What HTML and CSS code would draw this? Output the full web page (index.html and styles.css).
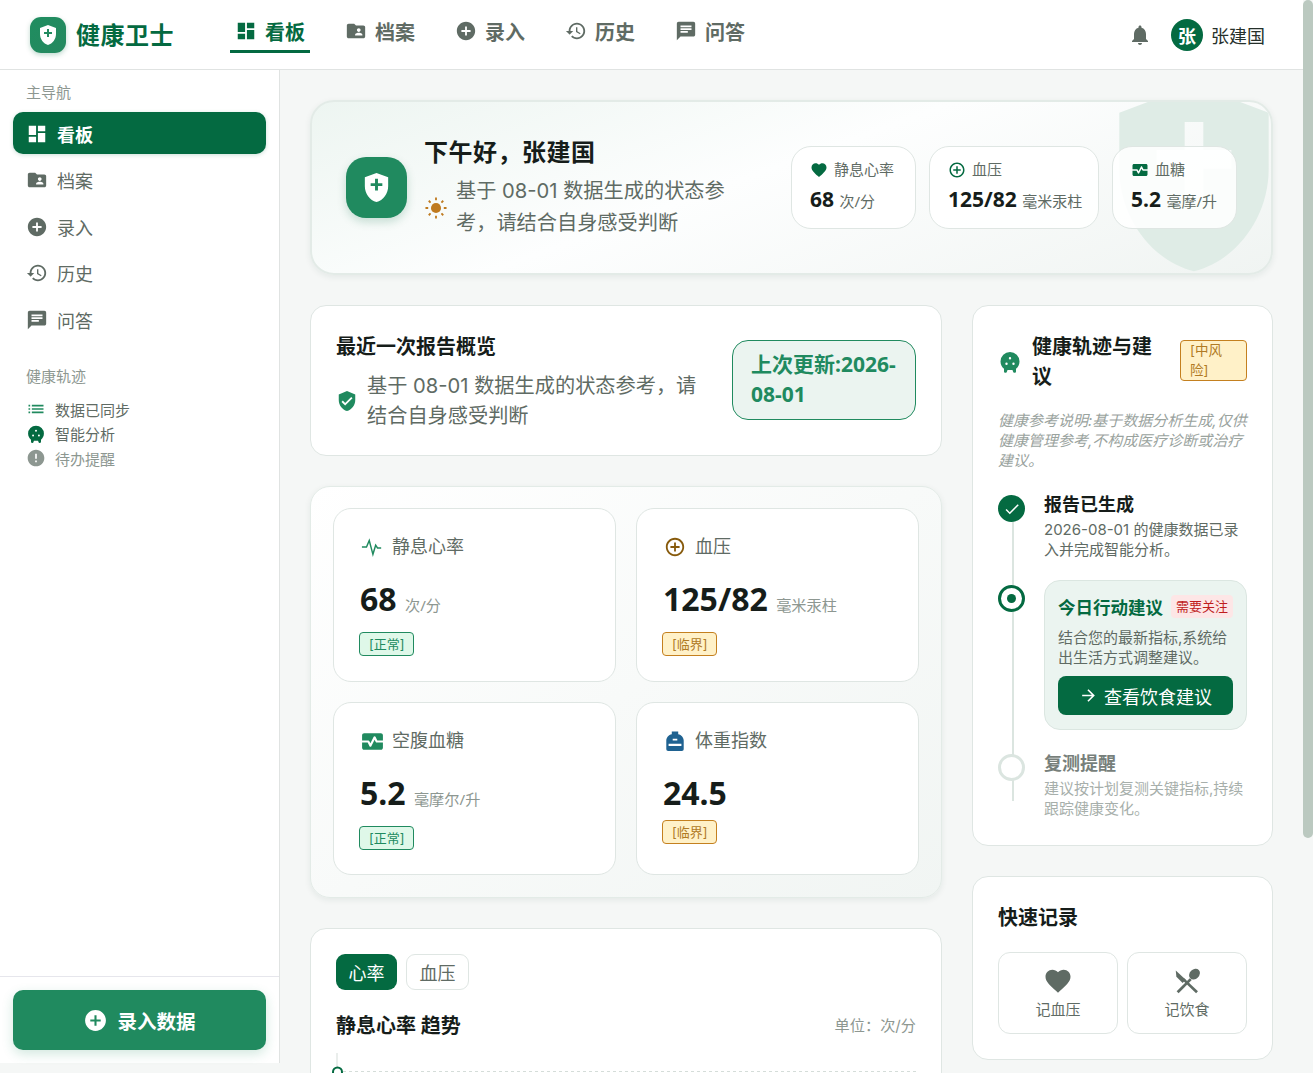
FILE: index.html
```html
<!DOCTYPE html>
<html lang="zh-CN">
<head>
    <meta charset="UTF-8">
    <meta name="viewport" content="width=device-width, initial-scale=1.0">
    <title>健康卫士</title>
    <link rel="stylesheet" href="styles.css">
</head>
<body>
    <svg class="sprite" aria-hidden="true">
        <symbol id="i-dashboard" viewBox="0 0 24 24"><path d="M3 13h8V3H3v10zm0 8h8v-6H3v6zm10 0h8V11h-8v10zm0-18v6h8V3h-8z"/></symbol>
        <symbol id="i-folder" viewBox="0 0 24 24"><path d="M20 6h-8l-2-2H4c-1.1 0-1.99.9-1.99 2L2 18c0 1.1.9 2 2 2h16c1.1 0 2-.9 2-2V8c0-1.1-.9-2-2-2zm-5 3c1.1 0 2 .9 2 2s-.9 2-2 2-2-.9-2-2 .9-2 2-2zm4 8h-8v-1c0-1.33 2.67-2 4-2s4 .67 4 2v1z"/></symbol>
        <symbol id="i-add" viewBox="0 0 24 24"><path d="M12 2C6.48 2 2 6.48 2 12s4.48 10 10 10 10-4.48 10-10S17.52 2 12 2zm5 11h-4v4h-2v-4H7v-2h4V7h2v4h4v2z"/></symbol>
        <symbol id="i-history" viewBox="0 0 24 24"><path d="M13 3c-4.97 0-9 4.03-9 9H1l3.89 3.89.07.14L9 12H6c0-3.87 3.13-7 7-7s7 3.13 7 7-3.13 7-7 7c-1.93 0-3.68-.79-4.94-2.06l-1.42 1.42C8.27 19.99 10.51 21 13 21c4.97 0 9-4.03 9-9s-4.03-9-9-9zm-1 5v5l4.28 2.54.72-1.21-3.5-2.08V8H12z"/></symbol>
        <symbol id="i-chat" viewBox="0 0 24 24"><path d="M20 2H4c-1.1 0-1.99.9-1.99 2L2 22l4-4h14c1.1 0 2-.9 2-2V4c0-1.1-.9-2-2-2zM6 9h12v2H6V9zm8 5H6v-2h8v2zm4-6H6V6h12v2z"/></symbol>
        <symbol id="i-bell" viewBox="0 0 24 24"><path d="M12 22c1.1 0 2-.9 2-2h-4c0 1.1.89 2 2 2zm6-6v-5c0-3.07-1.64-5.64-4.5-6.32V4c0-.83-.67-1.5-1.5-1.5s-1.5.67-1.5 1.5v.68C7.63 5.36 6 7.92 6 11v5l-2 2v1h16v-1l-2-2z"/></symbol>
        <symbol id="i-shield" viewBox="0 0 24 24"><path fill-rule="evenodd" d="M12 2 4 5v6.09c0 5.05 3.41 9.76 8 10.91 4.59-1.15 8-5.86 8-10.91V5l-8-3zM11 6h2v3h3v2h-3v3h-2v-3H8V9h3V6z"/></symbol>
        <symbol id="i-verified" viewBox="0 0 24 24"><path d="M12 1 3 5v6c0 5.55 3.84 10.74 9 12 5.16-1.26 9-6.45 9-12V5l-9-4zm-2 16-4-4 1.41-1.41L10 14.17l6.59-6.59L18 9l-8 8z"/></symbol>
        <symbol id="i-heart" viewBox="0 0 24 24"><path d="M12 21.35l-1.45-1.32C5.4 15.36 2 12.28 2 8.5 2 5.42 4.42 3 7.5 3c1.74 0 3.41.81 4.5 2.09C13.09 3.81 14.76 3 16.5 3 19.58 3 22 5.42 22 8.5c0 3.78-3.4 6.86-8.55 11.54L12 21.35z"/></symbol>
        <symbol id="i-point" viewBox="0 0 24 24"><path d="M13 7h-2v4H7v2h4v4h2v-4h4v-2h-4V7zm-1-5C6.48 2 2 6.48 2 12s4.48 10 10 10 10-4.48 10-10S17.52 2 12 2zm0 18c-4.41 0-8-3.59-8-8s3.59-8 8-8 8 3.59 8 8-3.59 8-8 8z"/></symbol>
        <symbol id="i-monitor" viewBox="0 0 24 24"><path d="M15.11 12.45 14 10.24l-3.11 6.21c-.16.34-.51.55-.89.55s-.73-.21-.89-.55L7.38 13H2v5c0 1.1.9 2 2 2h16c1.1 0 2-.9 2-2v-5h-6c-.38 0-.73-.21-.89-.55zM20 4H4c-1.1 0-2 .9-2 2v5h6c.38 0 .73.21.89.55L10 13.76l3.11-6.21c.34-.68 1.45-.68 1.79 0L16.62 11H22V6c0-1.1-.9-2-2-2z"/></symbol>
        <symbol id="i-pulse" viewBox="0 0 24 24"><polyline points="1,12 6,12 9,5 13,20 16,10 18,13 22,13" fill="none" stroke="currentColor" stroke-width="1.6"/></symbol>
        <symbol id="i-list" viewBox="0 0 24 24"><path d="M3 13h2v-2H3v2zm0 4h2v-2H3v2zm0-8h2V7H3v2zm4 4h14v-2H7v2zm0 4h14v-2H7v2zM7 7v2h14V7H7z"/></symbol>
        <symbol id="i-blob" viewBox="0 0 24 24"><path fill-rule="evenodd" d="M12 2a9.5 9.5 0 0 0-9.5 9.5c0 3.2 1.5 5.7 3.5 7.3V21a1.5 1.5 0 0 0 3 .5l.5-1.5h5l.5 1.5a1.5 1.5 0 0 0 3-.5v-2.2c2-1.6 3.5-4.1 3.5-7.3A9.5 9.5 0 0 0 12 2zm0 5a1.2 1.2 0 1 1 0 2.4A1.2 1.2 0 0 1 12 7zm-3.5 5.5a1.2 1.2 0 1 1 0 2.4 1.2 1.2 0 0 1 0-2.4zm7 0a1.2 1.2 0 1 1 0 2.4 1.2 1.2 0 0 1 0-2.4z"/></symbol>
        <symbol id="i-error" viewBox="0 0 24 24"><path d="M12 2C6.48 2 2 6.48 2 12s4.48 10 10 10 10-4.48 10-10S17.52 2 12 2zm1 15h-2v-2h2v2zm0-4h-2V7h2v6z"/></symbol>
        <symbol id="i-check" viewBox="0 0 24 24"><path d="M9 16.17 4.83 12l-1.42 1.41L9 19 21 7l-1.41-1.41z"/></symbol>
        <symbol id="i-arrow" viewBox="0 0 24 24"><path d="M12 4l-1.41 1.41L16.17 11H4v2h12.17l-5.58 5.59L12 20l8-8z"/></symbol>
        <symbol id="i-sun" viewBox="0 0 24 24"><circle cx="12" cy="12" r="5.5"/><path d="M11 .5h2v3h-2zM11 20.5h2v3h-2zM.5 11h3v2h-3zM20.5 11h3v2h-3zM3.4 4.8l1.4-1.4 2 2-1.4 1.4zM17.2 18.6l1.4-1.4 2 2-1.4 1.4zM3.4 19.2l2-2 1.4 1.4-2 2zM17.2 5.4l2-2 1.4 1.4-2 2z"/></symbol>
        <symbol id="i-weight" viewBox="0 0 24 24"><path fill-rule="evenodd" d="M8.5 1.5h7v3c3.5.8 6 3.5 6 7V21a2 2 0 0 1-2 2h-15a2 2 0 0 1-2-2v-9.5c0-3.5 2.5-6.2 6-7zM9.5 9.5v2h5v-2zM5 15v2.5h14V15z"/></symbol>
        <symbol id="i-meal" viewBox="0 0 24 24">
            <path d="M3 3.5 11 11l-2.5 2.5-5-5z"/>
            <line x1="9" y1="10.5" x2="20" y2="21" stroke="currentColor" stroke-width="2.2"/>
            <line x1="4.5" y1="21" x2="15" y2="10.5" stroke="currentColor" stroke-width="2.2"/>
            <ellipse cx="18" cy="6.5" rx="3.8" ry="4.8" transform="rotate(45 18 6.5)"/>
        </symbol>
    </svg>

    <div class="window">
        <div class="page">
            <header class="topbar">
                <div class="brand">
                    <span class="brand-mark"><svg class="ic"><use href="#i-shield"/></svg></span>
                    <span class="brand-name">健康卫士</span>
                </div>
                <nav class="topnav">
                    <a class="topnav-item active"><svg class="ic"><use href="#i-dashboard"/></svg>看板</a>
                    <a class="topnav-item"><svg class="ic"><use href="#i-folder"/></svg>档案</a>
                    <a class="topnav-item"><svg class="ic"><use href="#i-add"/></svg>录入</a>
                    <a class="topnav-item"><svg class="ic"><use href="#i-history"/></svg>历史</a>
                    <a class="topnav-item"><svg class="ic"><use href="#i-chat"/></svg>问答</a>
                </nav>
                <div class="topbar-user">
                    <svg class="ic bell"><use href="#i-bell"/></svg>
                    <span class="avatar">张</span>
                    <span class="user-name">张建国</span>
                </div>
            </header>

            <div class="body-row">
                <aside class="sidebar">
                    <div class="side-scroll">
                        <div class="side-label">主导航</div>
                        <nav class="sidenav">
                            <a class="sidenav-item active"><svg class="ic"><use href="#i-dashboard"/></svg>看板</a>
                            <a class="sidenav-item"><svg class="ic"><use href="#i-folder"/></svg>档案</a>
                            <a class="sidenav-item"><svg class="ic"><use href="#i-add"/></svg>录入</a>
                            <a class="sidenav-item"><svg class="ic"><use href="#i-history"/></svg>历史</a>
                            <a class="sidenav-item"><svg class="ic"><use href="#i-chat"/></svg>问答</a>
                        </nav>
                        <div class="side-label second">健康轨迹</div>
                        <ul class="side-status">
                            <li><svg class="ic green"><use href="#i-list"/></svg>数据已同步</li>
                            <li><svg class="ic deep"><use href="#i-blob"/></svg>智能分析</li>
                            <li class="muted"><svg class="ic"><use href="#i-error"/></svg>待办提醒</li>
                        </ul>
                    </div>
                    <div class="side-footer">
                        <button class="record-btn"><svg class="ic"><use href="#i-add"/></svg>录入数据</button>
                    </div>
                </aside>

                <main class="main">
                    <section class="hero">
                        <svg class="ic hero-watermark"><use href="#i-shield"/></svg>
                        <span class="hero-mark"><svg class="ic"><use href="#i-shield"/></svg></span>
                        <div class="hero-text">
                            <h1>下午好，张建国</h1>
                            <div class="hero-sub">
                                <svg class="ic sun"><use href="#i-sun"/></svg>
                                <p>基于 08-01 数据生成的状态参考，请结合自身感受判断</p>
                            </div>
                        </div>
                        <div class="hero-stats">
                            <div class="stat">
                                <div class="stat-label"><svg class="ic"><use href="#i-heart"/></svg>静息心率</div>
                                <div class="stat-value">68 <small>次/分</small></div>
                            </div>
                            <div class="stat">
                                <div class="stat-label"><svg class="ic"><use href="#i-point"/></svg>血压</div>
                                <div class="stat-value">125/82 <small>毫米汞柱</small></div>
                            </div>
                            <div class="stat">
                                <div class="stat-label"><svg class="ic"><use href="#i-monitor"/></svg>血糖</div>
                                <div class="stat-value">5.2 <small>毫摩/升</small></div>
                            </div>
                        </div>
                    </section>

                    <div class="columns">
                        <div class="col-left">
                            <section class="card report">
                                <div class="report-text">
                                    <h2>最近一次报告概览</h2>
                                    <div class="report-sub">
                                        <svg class="ic"><use href="#i-verified"/></svg>
                                        <p>基于 08-01 数据生成的状态参考，请结合自身感受判断</p>
                                    </div>
                                </div>
                                <div class="report-badge">上次更新:2026-08-01</div>
                            </section>

                            <section class="metrics">
                                <div class="metric">
                                    <div class="metric-label"><svg class="ic green"><use href="#i-pulse"/></svg>静息心率</div>
                                    <div class="metric-value">68 <small>次/分</small></div>
                                    <span class="tag ok">[正常]</span>
                                </div>
                                <div class="metric">
                                    <div class="metric-label"><svg class="ic brown"><use href="#i-point"/></svg>血压</div>
                                    <div class="metric-value">125/82 <small>毫米汞柱</small></div>
                                    <span class="tag warn">[临界]</span>
                                </div>
                                <div class="metric">
                                    <div class="metric-label"><svg class="ic green wide"><use href="#i-monitor"/></svg>空腹血糖</div>
                                    <div class="metric-value">5.2 <small>毫摩尔/升</small></div>
                                    <span class="tag ok">[正常]</span>
                                </div>
                                <div class="metric">
                                    <div class="metric-label"><svg class="ic blue"><use href="#i-weight"/></svg>体重指数</div>
                                    <div class="metric-value">24.5</div>
                                    <span class="tag warn">[临界]</span>
                                </div>
                            </section>

                            <section class="card chart-card">
                                <div class="tabs">
                                    <button class="tab active">心率</button>
                                    <button class="tab">血压</button>
                                </div>
                                <div class="chart-head">
                                    <h2>静息心率 趋势</h2>
                                    <span>单位：次/分</span>
                                </div>
                                <svg class="chart" viewBox="0 0 580 120" preserveAspectRatio="none">
                                    <line x1="1" y1="0" x2="1" y2="120" stroke="#d5ddd9"/>
                                    <line x1="1" y1="18.5" x2="580" y2="18.5" stroke="#d5ddd9" stroke-dasharray="3 3"/>
                                    <circle cx="1.5" cy="19" r="4.5" fill="#fff" stroke="#046a41" stroke-width="2"/>
                                </svg>
                            </section>
                        </div>

                        <div class="col-right">
                            <section class="card rail">
                                <div class="rail-head">
                                    <svg class="ic green"><use href="#i-blob"/></svg>
                                    <h2>健康轨迹与建议</h2>
                                    <span class="tag warn risk">[中风险]</span>
                                </div>
                                <p class="rail-note">健康参考说明:基于数据分析生成,仅供健康管理参考,不构成医疗诊断或治疗建议。</p>
                                <div class="timeline">
                                    <div class="step">
                                        <span class="dot done"><svg class="ic"><use href="#i-check"/></svg></span>
                                        <div>
                                            <h3>报告已生成</h3>
                                            <p>2026-08-01 的健康数据已录入并完成智能分析。</p>
                                        </div>
                                    </div>
                                    <div class="step current">
                                        <span class="dot now"></span>
                                        <div class="advice">
                                            <div class="advice-head">
                                                <h3>今日行动建议</h3>
                                                <span class="pill">需要关注</span>
                                            </div>
                                            <p>结合您的最新指标,系统给出生活方式调整建议。</p>
                                            <button class="advice-btn"><svg class="ic"><use href="#i-arrow"/></svg>查看饮食建议</button>
                                        </div>
                                    </div>
                                    <div class="step later">
                                        <span class="dot idle"></span>
                                        <div>
                                            <h3>复测提醒</h3>
                                            <p>建议按计划复测关键指标,持续跟踪健康变化。</p>
                                        </div>
                                    </div>
                                </div>
                            </section>

                            <section class="card quick">
                                <h2>快速记录</h2>
                                <div class="quick-grid">
                                    <button class="quick-btn"><svg class="ic"><use href="#i-heart"/></svg>记血压</button>
                                    <button class="quick-btn"><svg class="ic"><use href="#i-meal"/></svg>记饮食</button>
                                </div>
                            </section>
                        </div>
                    </div>
                </main>
            </div>
        </div>
        <div class="scrollbar"><div class="scrollbar-thumb"></div></div>
    </div>
</body>
</html>
```

FILE: styles.css
```css
* {
    box-sizing: border-box;
}

html, body {
    margin: 0;
    height: 100%;
    overflow: hidden;
}

body {
    font-family: Inter, "Noto Sans CJK SC", sans-serif;
    background-color: #f5f7f6;
    color: #161d1a;
}

h1, h2, h3, p, ul {
    margin: 0;
    padding: 0;
}

button {
    font-family: inherit;
    border: none;
    cursor: pointer;
}

.sprite {
    display: none;
}

.ic {
    width: 24px;
    height: 24px;
    fill: currentColor;
    flex-shrink: 0;
}

.green { color: #208a5f; }
.deep { color: #046a41; }
.brown { color: #875a0c; }
.blue { color: #1f6291; }

.window {
    display: flex;
    height: 100vh;
}

.page {
    flex: 1;
    min-width: 0;
    display: flex;
    flex-direction: column;
}

.scrollbar {
    width: 10px;
    flex-shrink: 0;
}

.scrollbar-thumb {
    height: 838px;
    background-color: #bbc9c0;
    border-radius: 5px;
}

/* top bar */
.topbar {
    height: 70px;
    flex-shrink: 0;
    display: flex;
    align-items: center;
    padding: 0 38px 0 30px;
    background-color: #fff;
    border-bottom: 1px solid #e0e3e2;
}

.brand {
    display: flex;
    align-items: center;
    gap: 10px;
    width: 200px;
}

.brand-mark {
    width: 36px;
    height: 36px;
    display: flex;
    align-items: center;
    justify-content: center;
    border-radius: 11px;
    background: linear-gradient(135deg, #1f8d60, #25895f);
    box-shadow: 0 2px 5px rgba(4, 106, 65, 0.25);
    color: #fff;
}

.brand-name {
    font-size: 24px;
    font-weight: 700;
    letter-spacing: 0.5px;
    color: #046a41;
    padding-bottom: 2px;
}

.topnav {
    display: flex;
    align-items: flex-start;
    gap: 30px;
    height: 100%;
}

.topnav-item {
    display: flex;
    align-items: center;
    gap: 8px;
    height: 41px;
    margin-top: 12px;
    padding: 0 5px;
    font-size: 20px;
    font-weight: 700;
    color: #5f6b64;
    border-bottom: 3px solid transparent;
}

.topnav-item .ic {
    width: 22px;
    height: 22px;
}

.topnav-item.active {
    color: #046a41;
    border-bottom-color: #046a41;
}

.topbar-user {
    margin-left: auto;
    display: flex;
    align-items: center;
}

.bell {
    color: #5f6b64;
    margin-right: 19px;
}

.avatar {
    width: 32px;
    height: 32px;
    display: flex;
    align-items: center;
    justify-content: center;
    border-radius: 50%;
    margin-right: 8px;
    background-color: #046a41;
    color: #fff;
    font-size: 18px;
    font-weight: 700;
}

.user-name {
    font-size: 18px;
    color: #26302b;
}

/* sidebar */
.body-row {
    flex: 1;
    min-height: 0;
    display: flex;
}

.sidebar {
    width: 280px;
    height: 993px;
    flex-shrink: 0;
    display: flex;
    flex-direction: column;
    background-color: #fff;
    border-right: 1px solid #e0e3e2;
}

.side-scroll {
    flex: 1;
    padding: 13px 13px 0;
}

.side-label {
    height: 20px;
    padding-left: 13px;
    font-size: 15px;
    line-height: 20px;
    color: #8d9791;
}

.side-label.second {
    margin-top: 27px;
}

.sidenav {
    display: flex;
    flex-direction: column;
    gap: 4.5px;
    margin-top: 9px;
}

.sidenav-item {
    height: 42px;
    display: flex;
    align-items: center;
    gap: 9px;
    padding: 1px 0 0 13px;
    border-radius: 10px;
    font-size: 18px;
    color: #5f6b64;
}

.sidenav-item .ic {
    width: 22px;
    height: 22px;
}

.sidenav-item.active {
    background-color: #046a41;
    color: #fff;
    font-weight: 700;
    box-shadow: 0 1px 4px rgba(4, 106, 65, 0.2);
}

.side-status {
    list-style: none;
    margin-top: 10px;
    padding-left: 13px;
}

.side-status li {
    height: 24.5px;
    display: flex;
    align-items: center;
    gap: 9px;
    font-size: 15px;
    color: #5f6b64;
}

.side-status .ic {
    width: 20px;
    height: 20px;
}

.side-status .muted {
    color: #8d9791;
}

.side-footer {
    height: 87px;
    padding: 13px;
    border-top: 1px solid #e6e6ec;
}

.record-btn {
    width: 100%;
    height: 60px;
    display: flex;
    align-items: center;
    justify-content: center;
    gap: 9px;
    padding-bottom: 1px;
    border-radius: 10px;
    background-color: #208a5f;
    color: #fff;
    font-size: 19.5px;
    font-weight: 700;
    box-shadow: 0 4px 12px rgba(32, 138, 95, 0.2);
}

.record-btn .ic {
    width: 25px;
    height: 25px;
}

/* main column */
.main {
    flex: 1;
    min-width: 0;
    padding: 30px;
    overflow: hidden;
}

.card {
    background-color: #fff;
    border: 1px solid #dfe6e3;
    border-radius: 16px;
}

.hero {
    position: relative;
    height: 175px;
    display: flex;
    align-items: center;
    padding: 0 34px;
    overflow: hidden;
    border: 2px solid #e3ebe7;
    border-radius: 24px;
    background: linear-gradient(160deg, #edf5f1 0%, #fdfefe 45%, #f0f4f2 100%);
    box-shadow: 0 2px 6px rgba(30, 60, 45, 0.08);
}

.hero-watermark {
    position: absolute;
    width: 224px;
    height: 224px;
    top: -36px;
    right: -35px;
    color: #dfece6;
}

.hero-mark {
    position: relative;
    width: 61px;
    height: 61px;
    flex-shrink: 0;
    display: flex;
    align-items: center;
    justify-content: center;
    border-radius: 20px;
    background-color: #208a5f;
    color: #fff;
    box-shadow: 0 4px 10px rgba(4, 106, 65, 0.2);
}

.hero-mark .ic {
    width: 35px;
    height: 35px;
}

.hero-text {
    position: relative;
    width: 320px;
    margin-left: 18px;
    padding-bottom: 1px;
    flex-shrink: 0;
}

.hero-text h1 {
    margin-left: -1px;
    font-size: 24px;
    font-weight: 700;
    letter-spacing: 0.5px;
    line-height: 34px;
    color: #161d1a;
}

.hero-sub {
    display: flex;
    align-items: center;
    gap: 9px;
    margin-top: 5px;
}

.sun {
    width: 22px;
    height: 22px;
    color: #bf7a1f;
    margin-top: 2px;
}

.hero-sub p {
    font-size: 20.2px;
    line-height: 32px;
    color: #5f6b64;
}

.hero-stats {
    position: relative;
    margin-left: auto;
    display: grid;
    grid-template-columns: 125px 170px 125px;
    gap: 13px;
}

.stat {
    height: 83px;
    padding: 12px 18px 0;
    border: 1px solid #dfe6e3;
    border-radius: 20px;
    background-color: rgba(255, 255, 255, 0.88);
}

.stat-label {
    display: flex;
    align-items: center;
    gap: 6px;
    font-size: 15px;
    line-height: 22px;
    color: #5f6b64;
}

.stat-label .ic {
    width: 18px;
    height: 18px;
    color: #046a41;
}

.stat-value {
    margin-top: 3px;
    font-family: "Noto Sans", "Noto Sans CJK SC", sans-serif;
    font-size: 21px;
    font-weight: 700;
    line-height: 30px;
    white-space: nowrap;
}

.stat-value small {
    font-size: 15px;
    font-weight: 400;
    color: #5f6b64;
}

.columns {
    display: grid;
    grid-template-columns: 632px 301px;
    gap: 30px;
    margin-top: 30px;
}

.col-left, .col-right {
    display: flex;
    flex-direction: column;
    gap: 30px;
    min-width: 0;
}

/* report */
.report {
    height: 151px;
    display: flex;
    align-items: center;
    gap: 16px;
    padding: 0 25px;
}

.report-text {
    flex: 1;
    min-width: 0;
    padding-top: 2px;
}

.report-text h2, .chart-head h2, .quick h2, .rail-head h2 {
    font-size: 20px;
    font-weight: 700;
    line-height: 30px;
}

.report-sub {
    display: flex;
    align-items: center;
    gap: 9px;
    margin-top: 9px;
}

.report-sub .ic {
    color: #208a5f;
    width: 22px;
    height: 22px;
}

.report-sub p {
    font-size: 20.2px;
    line-height: 30px;
    color: #5f6b64;
}

.report-badge {
    width: 184px;
    height: 80px;
    flex-shrink: 0;
    margin-top: -1px;
    padding: 8px 18px;
    border: 1px solid #208a5f;
    border-radius: 16px;
    background-color: #ebf4f0;
    color: #208a5f;
    font-family: "Noto Sans", "Noto Sans CJK SC", sans-serif;
    font-size: 21px;
    font-weight: 700;
    line-height: 30px;
}

/* metrics */
.metrics {
    height: 412px;
    display: grid;
    grid-template-columns: 1fr 1fr;
    grid-template-rows: 174px 173px;
    gap: 20px;
    padding: 21px 22px;
    border: 1px solid #e3ebe7;
    border-radius: 20px;
    background: linear-gradient(145deg, #fff 0%, #f1f5f3 100%);
    box-shadow: 0 2px 6px rgba(30, 60, 45, 0.08);
}

.metric {
    padding: 25px 26px;
    border: 1px solid #dfe6e3;
    border-radius: 18px;
    background-color: #fff;
}

.metric-label {
    display: flex;
    align-items: center;
    gap: 9px;
    font-size: 18px;
    line-height: 26px;
    color: #5f6b64;
}

.metric-label .ic {
    width: 22px;
    height: 22px;
    margin-left: 1px;
}

.metric-label .ic.wide {
    width: 25px;
    height: 25px;
    margin: 0 -2px 0 0;
}

.metric-value {
    margin-top: 15px;
    font-family: "Noto Sans", "Noto Sans CJK SC", sans-serif;
    font-size: 32px;
    font-weight: 700;
    line-height: 48px;
    white-space: nowrap;
}

.metric-value small {
    font-size: 15.2px;
    font-weight: 400;
    color: #8d9791;
}

.tag {
    display: inline-block;
    border: 1px solid;
    border-radius: 4px;
    font-size: 13px;
    line-height: 22px;
    padding: 0 9px;
    margin: 3px 0 0 -1px;
}

.tag.ok {
    background-color: #dff8e9;
    border-color: #208a5f;
    color: #208a5f;
}

.tag.warn {
    background-color: #fff1c8;
    border-color: #c4801f;
    color: #b07a24;
}

/* chart */
.chart-card {
    padding: 25px 25px 0;
}

.tabs {
    display: flex;
    gap: 9px;
}

.tab {
    height: 36px;
    padding: 0 12.5px;
    border: 1px solid #dfe6e3;
    border-radius: 9px;
    background-color: #fff;
    font-size: 18px;
    color: #5f6b64;
}

.tab.active {
    border: none;
    background-color: #046a41;
    color: #fff;
}

.chart-head {
    display: flex;
    align-items: center;
    justify-content: space-between;
    margin-top: 21px;
}

.chart-head span {
    font-size: 15.2px;
    padding-bottom: 5px;
    color: #8d9791;
}

.chart {
    display: block;
    width: 100%;
    height: 120px;
    margin-top: 12px;
    overflow: visible;
}

/* rail */
.rail {
    height: 541px;
    padding: 25px 25px 0;
}

.rail-head {
    display: flex;
    align-items: center;
}

.rail-head .ic {
    width: 24px;
    height: 24px;
    margin-right: 10px;
}

.rail-head h2 {
    width: 120px;
    flex-shrink: 0;
    padding-top: 1px;
}

.tag.risk {
    width: 67px;
    margin: -2px 0 0 auto;
    padding: 0 9px;
    font-size: 13.5px;
    line-height: 19.5px;
}

.rail-note {
    margin-top: 19px;
    font-size: 15px;
    font-style: italic;
    line-height: 20px;
    color: #9aa39e;
}

.timeline {
    position: relative;
    margin-top: 20px;
}

.timeline::before {
    content: "";
    position: absolute;
    left: 14px;
    top: 14px;
    bottom: 18px;
    width: 2px;
    background-color: #dbe5e0;
}

.step {
    position: relative;
    display: flex;
    gap: 19px;
}

.dot {
    width: 27px;
    height: 27px;
    flex-shrink: 0;
    display: flex;
    align-items: center;
    justify-content: center;
    border-radius: 50%;
    background-color: #fff;
}

.dot.done {
    background-color: #046a41;
    color: #fff;
    margin-top: 4px;
}

.dot.done .ic {
    width: 18px;
    height: 18px;
}

.dot.now {
    border: 3px solid #046a41;
    margin-top: 5px;
}

.dot.now::after {
    content: "";
    width: 9px;
    height: 9px;
    border-radius: 50%;
    background-color: #046a41;
}

.dot.idle {
    border: 3px solid #dbe5e0;
    margin-top: 4px;
}

.step h3 {
    padding-top: 1px;
    font-size: 18px;
    font-weight: 700;
    line-height: 26px;
}

.step p {
    font-size: 15px;
    line-height: 20px;
    color: #5f6b64;
    margin-top: 2px;
}

.step.current {
    margin-top: 20px;
}

.step.later {
    margin-top: 20px;
}

.step.later h3 {
    color: #777f7b;
}

.step.later p {
    color: #a7afab;
}

.advice {
    flex: 1;
    min-width: 0;
    height: 150px;
    padding: 13px;
    border: 1px solid #dbe6e1;
    border-radius: 16px;
    background-color: #ebf4f0;
}

.advice-head {
    display: flex;
    align-items: flex-start;
    justify-content: space-between;
}

.advice-head h3 {
    color: #046a41;
    font-size: 17.5px;
    white-space: nowrap;
}

.pill {
    height: 23px;
    margin-top: 1px;
    padding: 0 5px;
    border-radius: 4px;
    background-color: #fde6e6;
    color: #c01d1d;
    font-size: 13px;
    line-height: 23px;
    white-space: nowrap;
}

.advice p {
    margin-top: 7px;
}

.advice-btn {
    width: 100%;
    height: 39px;
    margin-top: 8px;
    display: flex;
    align-items: center;
    justify-content: center;
    gap: 6px;
    border-radius: 8px;
    background-color: #046a41;
    color: #fff;
    font-size: 18px;
}

.advice-btn .ic {
    width: 19px;
    height: 19px;
}

/* quick */
.quick {
    height: 184px;
    padding: 26px 25px 0;
}

.quick-grid {
    display: grid;
    grid-template-columns: 1fr 1fr;
    gap: 9px;
    margin-top: 19px;
}

.quick-btn {
    height: 82px;
    display: flex;
    flex-direction: column;
    align-items: center;
    justify-content: center;
    gap: 4px;
    border: 1px solid #dfe6e3;
    border-radius: 12px;
    background-color: #fff;
    font-size: 15px;
    line-height: 20px;
    color: #5f6b64;
}

.quick-btn .ic {
    width: 30px;
    height: 30px;
}
```
